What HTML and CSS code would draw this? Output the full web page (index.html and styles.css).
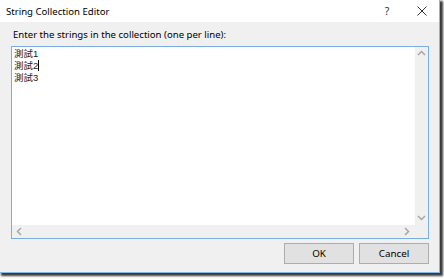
FILE: index.html
```html
<!DOCTYPE html>
<html>
<head>
<meta charset="utf-8">
<link rel="stylesheet" href="styles.css">
</head>
<body>
<div class="window">
  <div class="titlebar">
    <span class="title">String Collection Editor</span>
    <span class="help">?</span>
    <span class="close">
      <svg width="10" height="10" viewBox="0 0 10 10"><path d="M0.5 0.5 L9.5 9.5 M9.5 0.5 L0.5 9.5" stroke="#333" stroke-width="1" fill="none"/></svg>
    </span>
  </div>
  <div class="content">
    <div class="label">Enter the strings in the collection (one per line):</div>
    <div class="editor">
      <div class="text">
        <div class="line">測試1</div>
        <div class="line">測試2<span class="caret"></span></div>
        <div class="line">測試3</div>
      </div>
      <div class="vscroll">
        <svg width="9" height="6" viewBox="0 0 9 6"><path d="M1 5 L4.5 1.5 L8 5" stroke="#a6a6a6" stroke-width="1.5" fill="none"/></svg>
        <svg width="9" height="6" viewBox="0 0 9 6"><path d="M1 1 L4.5 4.5 L8 1" stroke="#a6a6a6" stroke-width="1.5" fill="none"/></svg>
      </div>
      <div class="hscroll">
        <svg width="6" height="9" viewBox="0 0 6 9"><path d="M5 1 L1.5 4.5 L5 8" stroke="#a6a6a6" stroke-width="1.5" fill="none"/></svg>
        <svg width="6" height="9" viewBox="0 0 6 9"><path d="M1 1 L4.5 4.5 L1 8" stroke="#a6a6a6" stroke-width="1.5" fill="none"/></svg>
      </div>
      <div class="corner"></div>
    </div>
    <div class="buttons">
      <button class="btn">OK</button>
      <button class="btn">Cancel</button>
    </div>
  </div>
</div>
</body>
</html>
```

FILE: styles.css
```css
html, body {
  margin: 0;
  padding: 0;
  background: #ffffff;
  width: 444px;
  height: 279px;
  overflow: hidden;
}
body {
  font-family: "Noto Sans", "Noto Sans CJK TC", sans-serif;
  font-size: 9.5px;
  color: #000;
}
.window {
  width: 439px;
  height: 272px;
  border-right: 1px solid #86b6e4;
  border-bottom: 1px solid #86b6e4;
  box-shadow: 2px 2px 2px 1px #3a3a3a;
  background: #f0f0f0;
  display: flex;
  flex-direction: column;
}
.titlebar {
  height: 22px;
  background: #ffffff;
  display: flex;
  align-items: center;
  padding-left: 6px;
  padding-right: 12px;
}
.title {
  flex: 1;
  font-size: 9.6px;
  color: #000;
}
.help {
  width: 12px;
  text-align: center;
  color: #333;
  font-size: 10.5px;
  margin-right: 24px;
}
.close {
  display: flex;
  align-items: center;
}
.content {
  flex: 1;
  display: flex;
  flex-direction: column;
  padding: 4px 10px 0 11px;
}
.label {
  height: 20px;
  line-height: 18px;
  padding-left: 2px;
  font-size: 9.6px;
}
.editor {
  width: 416px;
  height: 191px;
  border: 1px solid #7aade0;
  background: #fff;
  display: grid;
  grid-template-columns: 1fr 13px;
  grid-template-rows: 1fr 13px;
}
.text {
  padding: 1px 2px;
  font-family: "Liberation Sans", "Noto Sans CJK TC", sans-serif;
  font-size: 9.5px;
  line-height: 12px;
  color: #1a1a1a;
}
.line {
  height: 12px;
}
.caret {
  display: inline-block;
  width: 1px;
  height: 11px;
  background: #000;
  vertical-align: -2px;
}
.vscroll {
  background: #f0f0f0;
  display: flex;
  flex-direction: column;
  justify-content: space-between;
  align-items: center;
  padding: 3px 0 4px;
}
.hscroll {
  background: #f0f0f0;
  display: flex;
  justify-content: space-between;
  align-items: center;
  padding: 0 5px 0 4px;
}
.corner {
  background: #f0f0f0;
}
.buttons {
  display: flex;
  justify-content: flex-end;
  gap: 5px;
  margin-top: 4px;
  padding-right: 0;
}
.btn {
  width: 70px;
  height: 21px;
  background: #e1e1e1;
  border: 1px solid #adadad;
  font-family: "Noto Sans", sans-serif;
  font-size: 9.8px;
  color: #000;
  padding: 0;
  margin: 0;
}
```
